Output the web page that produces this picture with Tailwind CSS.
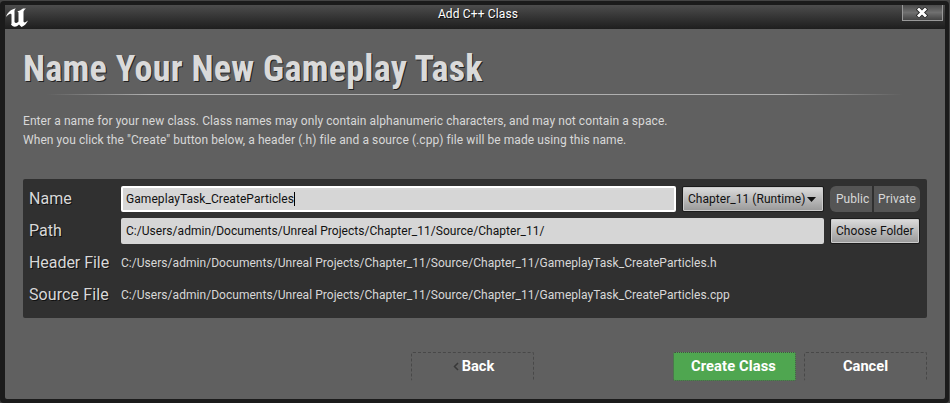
<!DOCTYPE html>
<html lang="en">
<head>
<meta charset="utf-8">
<title>Add C++ Class</title>
<script src="https://cdn.jsdelivr.net/npm/@tailwindcss/browser@4"></script>
</head>
<body class="w-[950px] h-[403px] overflow-hidden bg-[#444] font-[Roboto,sans-serif] text-[12px] text-[#d8d8d8]">
<div class="w-[949px] h-[402px] mt-px bg-[#1b1b1b] rounded-[4px] pt-1 px-1 pb-1 pl-[5px] flex flex-col whitespace-nowrap">
  <header class="h-6 shrink-0 bg-linear-to-b from-[#4d4d4d] to-[#1e1e1e] flex justify-between relative">
    <svg class="w-[23px] h-[22px] mt-[2px] ml-px" viewBox="0 0 23 22"><path fill="#fff" d="M0 10C1 6 5 2 10 1.500C8.500 2.500 8.500 3.500 8.500 5V15C9.500 16.500 11.500 16 12.500 14.500V6C12.500 5 12 4.500 11 4.500C13 4 15 3 17 1.500H20C18 3 17.500 4 17.500 5V14C17.500 16 19 16 22 13.500C20.500 17 18 19 15.500 20L13 17.500C10 20.500 7.500 20.500 5 17.500C5.500 17 5.500 16.500 5.500 15.500V8C5.500 5.500 2 7.500 0 10Z"/></svg>
    <h1 class="absolute inset-x-0 top-0 h-[18px] leading-[18px] pl-[6px] text-center text-white tracking-[0.14px] [text-shadow:1px_1px_0_#111]">Add C++ Class</h1>
    <button class="w-[41px] h-[16px] mr-[2px] pr-[2px] border border-[#999] border-t-0 bg-linear-to-b from-[#4b4b4b] via-[#707070] to-[#444] flex items-center justify-center"><svg class="w-[12px] h-[11px]" viewBox="0 0 12 11"><path d="M1.500 1L10.500 10M10.500 1L1.500 10" stroke="#222" stroke-width="4.500"/><path d="M2 1.500L10 9.500M10 1.500L2 9.500" stroke="#fff" stroke-width="2.900"/></svg></button>
  </header>
  <main class="grow bg-[#606060] px-[18px] rounded-b-[2px] flex flex-col">
    <h2 class="h-[65px] pt-[19px] leading-[42px] text-[36px] tracking-[0.3px] font-bold [font-stretch:75%] text-[#dadada] [text-shadow:1px_1px_0_#222]">Name Your New Gameplay Task</h2>
    <div class="h-px mr-6 ml-6 bg-linear-to-r from-transparent from-0% via-[#b0b0b0] via-12% to-[#b0b0b0] to-88%"><div class="h-px ml-auto w-[120px] bg-linear-to-r from-transparent to-[#606060]"></div></div>
    <p class="mt-[17px] leading-[19px] tracking-[0.075px]"><span>Enter a name for your new class. Class names may only contain alphanumeric characters, and may not contain a space.</span><br><span>When you click the "Create" button below, a header (.h) file and a source (.cpp) file will be made using this name.</span></p>
    <section class="mt-[29px] h-[139px] w-[904px] rounded-[2px] bg-[#303030] pt-[7px] pl-[6px] pr-[7px] tracking-[0.04px]">
      <div class="h-8 flex"><label class="w-[92px] text-[16px] leading-[26px] [text-shadow:1px_1px_0_#111]">Name</label>
        <div class="w-[555px] h-[26px] border-2 border-white bg-[#d6d6d6] rounded-[2px] text-[#111] pl-[3px] leading-[22px] flex items-center"><span class="tracking-[0.07px]">GameplayTask_CreateParticles</span><i class="w-px h-[14px] bg-black"></i></div>
        <button class="ml-[6px] w-[142px] h-[26px] border border-[#1b1b1b] rounded-[2px] bg-linear-to-b from-[#ddd] to-[#999] text-[#111] pl-[5px] flex items-center gap-[2px] shadow-[inset_0_0_0_1px_#ccc]"><span>Chapter_11 (Runtime)</span><svg class="w-[9px] h-[5px]" viewBox="0 0 9 5"><path d="M0 0H9L4.500 5Z" fill="#111"/></svg></button>
        <div class="ml-[6px] w-[90px] h-[26px] rounded-[6px] bg-[#555] flex leading-[26px] overflow-hidden"><span class="w-[42px] pl-[6px]">Public</span><span class="grow border-l-2 border-[#303030] pl-[4px] tracking-[0.12px]">Private</span></div>
      </div>
      <div class="h-8 flex"><label class="w-[92px] text-[16px] leading-[26px] [text-shadow:1px_1px_0_#111]">Path</label>
        <div class="w-[703px] h-[26px] bg-[#d6d6d6] rounded-[2px] text-[#111] pl-[5px] leading-[26px]"><span>C:/Users/admin/Documents/Unreal Projects/Chapter_11/Source/Chapter_11/</span></div>
        <button class="ml-[6px] w-[90px] h-[26px] border border-[#1b1b1b] rounded-[2px] bg-linear-to-b from-[#ddd] to-[#999] text-[#111] pl-[5px] text-left shadow-[inset_0_0_0_1px_#ccc]"><span>Choose Folder</span></button>
      </div>
      <div class="h-8 flex leading-[26px]"><span class="w-[92px] text-[16px] tracking-[-0.05px] [text-shadow:1px_1px_0_#111]">Header File</span><span>C:/Users/admin/Documents/Unreal Projects/Chapter_11/Source/Chapter_11/GameplayTask_CreateParticles.h</span></div>
      <div class="h-8 flex leading-[26px]"><span class="w-[92px] text-[16px] tracking-[0.1px] [text-shadow:1px_1px_0_#111]">Source File</span><span>C:/Users/admin/Documents/Unreal Projects/Chapter_11/Source/Chapter_11/GameplayTask_CreateParticles.cpp</span></div>
    </section>
    <footer class="mt-[34px] flex h-[29px] w-[904px] text-[14.700px] font-bold text-white [text-shadow:1px_1px_0_#111]">
      <button class="ml-[388px] w-[123px] border border-dashed border-[#484848] rounded-[2px] border-b-transparent flex items-center justify-center gap-[3px] pl-[2px]"><svg class="w-[6px] h-[9px]" viewBox="0 0 6 9"><path d="M5 1L1.500 4.500L5 8" fill="none" stroke="#383838" stroke-width="1.500"/></svg>Back</button>
      <button class="ml-[139px] w-[123px] border border-dotted border-[#484848] rounded-[2px] bg-[#4fa650] tracking-[0.12px] pr-[2px]">Create Class</button>
      <button class="ml-2 w-[123px] border border-dashed border-[#484848] rounded-[2px] border-b-transparent">Cancel</button>
    </footer>
  </main>
</div>
</body>
</html>
